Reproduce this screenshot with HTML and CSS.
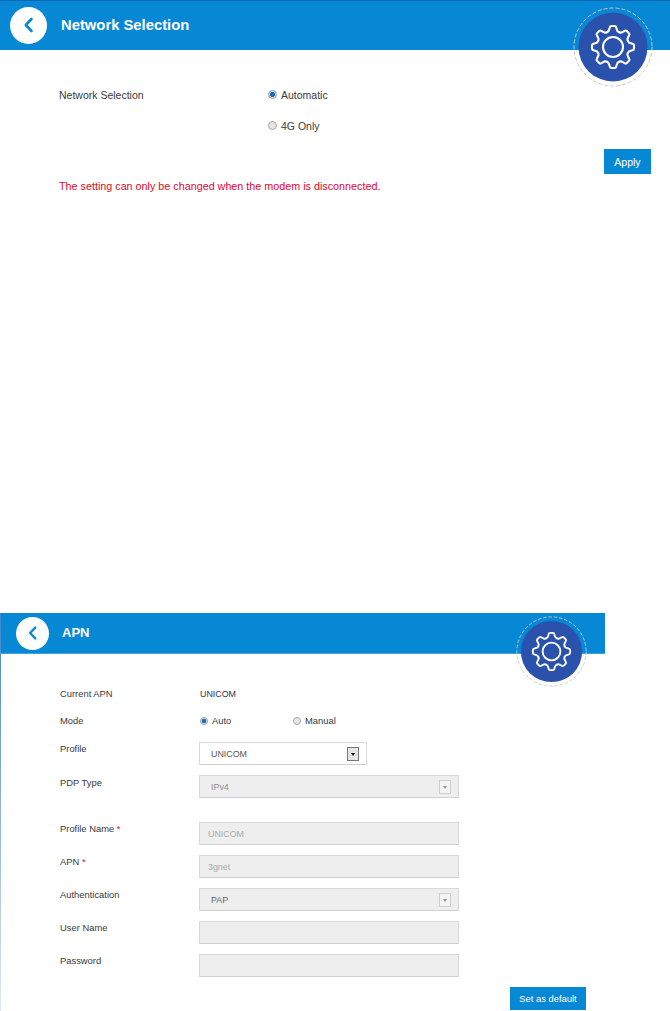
FILE: index.html
```html
<!DOCTYPE html>
<html lang="en">
<head>
<meta charset="utf-8">
<title>Network Selection and APN</title>
<link rel="stylesheet" href="styles.css">
</head>
<body>
<section class="panel panel-network">
  <header class="bar bar-large">
    <button class="back back-large" aria-label="Back"><svg viewBox="0 0 20 20"><path d="M12.5 4 L6.8 10 L12.5 16"/></svg></button>
    <h1 class="title title-large">Network Selection</h1>
  </header>
  <svg class="badge badge-large" viewBox="0 0 80 80"><use href="#gear-badge"/></svg>
  <div class="network-body">
    <div class="network-row">
      <span class="label">Network Selection</span>
      <div class="radio-stack">
        <label class="radio-label"><input class="radio" type="radio" name="net" checked>Automatic</label>
        <label class="radio-label"><input class="radio" type="radio" name="net">4G Only</label>
      </div>
    </div>
    <div class="actions actions-apply"><button class="btn btn-apply">Apply</button></div>
    <p class="warning">The setting can only be changed when the modem is disconnected.</p>
  </div>
</section>

<section class="panel panel-apn">
  <header class="bar bar-small">
    <button class="back back-small" aria-label="Back"><svg viewBox="0 0 20 20"><path d="M12.5 4 L6.8 10 L12.5 16"/></svg></button>
    <h2 class="title title-small">APN</h2>
  </header>
  <svg class="badge badge-small" viewBox="0 0 80 80"><use href="#gear-badge"/></svg>
  <div class="apn-body">
    <div class="info-row"><span class="label">Current APN</span><span class="value">UNICOM</span></div>
    <div class="info-row info-mode"><span class="label">Mode</span>
      <div class="mode-options">
        <label class="radio-label mode-auto"><input class="radio radio-small" type="radio" name="mode" checked>Auto</label>
        <label class="radio-label"><input class="radio radio-small" type="radio" name="mode">Manual</label>
      </div>
    </div>
    <div class="form-row row-profile"><span class="label">Profile</span>
      <div class="field field-short field-active">UNICOM<span class="arrow arrow-active"></span></div>
    </div>
    <div class="form-row row-pdp"><span class="label">PDP Type</span>
      <div class="field field-off">IPv4<span class="arrow"></span></div>
    </div>
    <div class="form-row row-name"><span class="label">Profile Name <b class="req">*</b></span>
      <div class="field field-off field-text">UNICOM</div>
    </div>
    <div class="form-row"><span class="label">APN <b class="req">*</b></span>
      <div class="field field-off field-text">3gnet</div>
    </div>
    <div class="form-row"><span class="label">Authentication</span>
      <div class="field field-off field-auth">PAP<span class="arrow"></span></div>
    </div>
    <div class="form-row"><span class="label">User Name</span>
      <div class="field field-off"></div>
    </div>
    <div class="form-row"><span class="label">Password</span>
      <div class="field field-off"></div>
    </div>
    <div class="actions actions-default"><button class="btn btn-default">Set as default</button></div>
  </div>
</section>

<svg class="defs" width="0" height="0" aria-hidden="true">
  <defs>
    <path id="tooth" d="M-6.12 -14.78 Q-4.2 -15.6 -4 -17 L-3.2 -19.5 Q-3 -21 -1.5 -21 L1.5 -21 Q3 -21 3.2 -19.5 L4 -17 Q4.2 -15.6 6.12 -14.78"/>
    <g id="gear-badge">
      <circle cx="40" cy="40" r="39" fill="none" stroke="#c9c9c9" stroke-width="1" stroke-dasharray="4 2"/>
      <circle cx="40" cy="40" r="34.5" fill="#2a52ad"/>
      <g transform="translate(40 40)" fill="none" stroke="#fff" stroke-width="2.1" stroke-linecap="round" stroke-linejoin="round">
        <use href="#tooth"/>
        <use href="#tooth" transform="rotate(45)"/>
        <use href="#tooth" transform="rotate(90)"/>
        <use href="#tooth" transform="rotate(135)"/>
        <use href="#tooth" transform="rotate(180)"/>
        <use href="#tooth" transform="rotate(225)"/>
        <use href="#tooth" transform="rotate(270)"/>
        <use href="#tooth" transform="rotate(315)"/>
        <circle r="10"/>
      </g>
    </g>
  </defs>
</svg>
</body>
</html>
```

FILE: styles.css
```css
* { box-sizing: border-box; }
html, body { margin: 0; padding: 0; background: #fff; }
body {
  width: 670px;
  height: 1011px;
  overflow: hidden;
  font-family: "Liberation Sans", Arial, sans-serif;
  font-size: 10.5px;
  color: #3a3a3a;
}
.defs { position: absolute; }
.panel { position: relative; }
.panel-network { height: 613px; }
.panel-apn {
  width: 605px;
  height: 398px;
  padding-left: 1px;
  background: linear-gradient(to bottom, #3f86cc 0, #8db4dc 50%, #dfe9f3 100%) left top / 1px 100% no-repeat;
}
.bar { display: flex; align-items: center; background: #0788d5; }
.bar-large { height: 50px; padding: 0 0 1px 10px; border-top: 1px solid #1169b4; }
.bar-small { height: 41px; padding-left: 15px; border-bottom: 1px solid #3fa3e3; }
.back {
  display: flex; align-items: center; justify-content: center;
  padding: 0; border: 0; border-radius: 50%; background: #fff;
}
.back svg { fill: none; stroke: #0788d5; stroke-width: 2.6; stroke-linecap: round; stroke-linejoin: round; }
.back-large { width: 37px; height: 37px; }
.back-large svg { width: 20px; height: 20px; }
.back-small { width: 33px; height: 33px; }
.back-small svg { width: 18px; height: 18px; }
.title { margin: 0; color: #fff; font-weight: 700; }
.title-large { margin: 0 0 1px 14px; font-size: 14.8px; }
.title-small { margin: 0 0 1px 13px; font-size: 13px; }
.badge { position: absolute; display: block; }
.badge-large { left: 573px; top: 7px; width: 80px; height: 80px; }
.badge-small { left: 516px; top: 3px; width: 71px; height: 71px; }

.network-body { padding: 39px 19px 0 59px; }
.network-row { display: grid; grid-template-columns: 209px 1fr; }
.radio-stack { display: flex; flex-direction: column; gap: 18px; margin-top: -1px; }
.radio-label { display: flex; align-items: center; height: 13px; gap: 4px; }
.radio {
  appearance: none; margin: 0; width: 9px; height: 9px; flex: none;
  border: 1px solid #a9a9a9; border-radius: 50%;
  background: #e6e6e6;
}
.radio:checked { background: radial-gradient(circle, #1d6fb5 0 2.4px, #dfe7ee 2.9px); border-color: #8d9aa5; }
.radio-small { width: 8px; height: 8px; }
.radio-small:checked { background: radial-gradient(circle, #1d6fb5 0 2px, #dfe7ee 2.5px); }
.actions { display: flex; justify-content: flex-end; }
.actions-apply { margin-top: 17px; }
.btn { padding: 0; border: 0; background: #0788d5; color: #fff; font: inherit; }
.btn-apply { width: 47px; height: 25px; }
.warning { margin: 6px 0 0; color: #e2062c; font-size: 10.77px; line-height: 13px; }

.apn-body { padding: 33px 19px 0 58px; font-size: 9.4px; }
.info-row { display: grid; grid-template-columns: 141px 1fr; line-height: 14px; }
.info-mode { margin-top: 13px; }
.value { color: #3a2a4a; font-size: 8.9px; }
.mode-options { display: flex; align-items: center; height: 14px; }
.mode-auto { width: 93px; }
.form-row { display: grid; grid-template-columns: 140px 260px; margin-top: 10px; min-height: 23px; line-height: 13px; }
.form-row .label { margin-left: 1px; }
.info-row .label { margin-left: 1px; }
.row-profile { margin-top: 14px; }
.row-pdp .label { padding-top: 1px; }
.row-name { margin-top: 24px; }
.req { color: #e2062c; font-weight: 400; }
.field {
  position: relative; height: 23px; padding: 0 0 0 11px; line-height: 22px;
  border: 1px solid #d9d9d9; border-bottom: 1px solid #cfcfcf; color: #555; font-size: 8.9px;
}
.field-short { width: 168px; }
.field-active { background: #fff; }
.field-off { background: #eee; color: #8f8f8f; }
.field-text { padding-left: 8px; color: #aaa; }
.field-auth { padding-left: 11px; color: #666; }
.arrow {
  position: absolute; right: 7px; top: 4px; width: 12px; height: 14px;
  border: 1px solid #cfcfcf; background: #f4f4f4;
}
.arrow::after {
  content: ""; position: absolute; left: 3px; top: 5px;
  border: 2.5px solid transparent; border-top: 3px solid #999; border-bottom: 0;
}
.arrow-active { border-color: #777; background: #e4e4e4; }
.arrow-active::after { border-top-color: #111; }
.actions-default { margin-top: 10px; }
.btn-default { width: 76px; height: 23px; }
```
